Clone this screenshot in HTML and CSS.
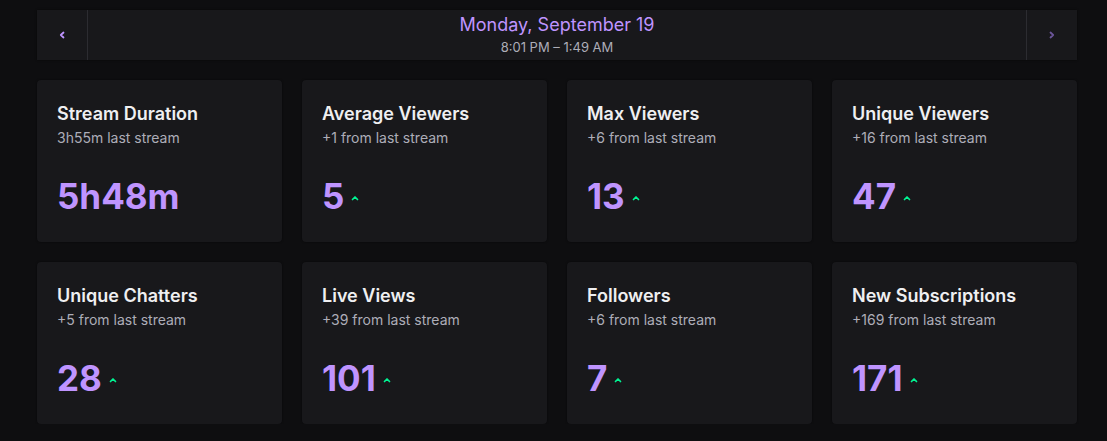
FILE: index.html
```
<!DOCTYPE html>
<html>
<head>
<meta charset="utf-8">
<link rel="stylesheet" href="styles.css">
</head>
<body>
<div class="page">
  <div class="datebar">
    <div class="nav">
      <svg width="8" height="8" viewBox="0 0 8 8"><path d="M5.5 1.5 L2.8 4 L5.5 6.5" fill="none" stroke="#bf94ff" stroke-width="1.8" stroke-linecap="round" stroke-linejoin="round"/></svg>
    </div>
    <div class="date">
      <div class="day">Monday, September 19</div>
      <div class="time">8:01 PM – 1:49 AM</div>
    </div>
    <div class="nav nav-right">
      <svg width="8" height="8" viewBox="0 0 8 8"><path d="M2.5 1.5 L5.2 4 L2.5 6.5" fill="none" stroke="#6b559a" stroke-width="1.8" stroke-linecap="round" stroke-linejoin="round"/></svg>
    </div>
  </div>
  <div class="grid">
    <div class="card"><div class="title">Stream Duration</div><div class="sub">3h55m last stream</div><div class="value"><span>5h48m</span></div></div>
    <div class="card"><div class="title">Average Viewers</div><div class="sub">+1 from last stream</div><div class="value"><span>5</span><svg class="up" width="8" height="6" viewBox="0 0 8 6"><path d="M1.5 4.5 L4 2 L6.5 4.5" fill="none" stroke="#00f593" stroke-width="1.7" stroke-linecap="round" stroke-linejoin="round"/></svg></div></div>
    <div class="card"><div class="title">Max Viewers</div><div class="sub">+6 from last stream</div><div class="value"><span>13</span><svg class="up" width="8" height="6" viewBox="0 0 8 6"><path d="M1.5 4.5 L4 2 L6.5 4.5" fill="none" stroke="#00f593" stroke-width="1.7" stroke-linecap="round" stroke-linejoin="round"/></svg></div></div>
    <div class="card"><div class="title">Unique Viewers</div><div class="sub">+16 from last stream</div><div class="value"><span>47</span><svg class="up" width="8" height="6" viewBox="0 0 8 6"><path d="M1.5 4.5 L4 2 L6.5 4.5" fill="none" stroke="#00f593" stroke-width="1.7" stroke-linecap="round" stroke-linejoin="round"/></svg></div></div>
    <div class="card"><div class="title">Unique Chatters</div><div class="sub">+5 from last stream</div><div class="value"><span>28</span><svg class="up" width="8" height="6" viewBox="0 0 8 6"><path d="M1.5 4.5 L4 2 L6.5 4.5" fill="none" stroke="#00f593" stroke-width="1.7" stroke-linecap="round" stroke-linejoin="round"/></svg></div></div>
    <div class="card"><div class="title">Live Views</div><div class="sub">+39 from last stream</div><div class="value"><span>101</span><svg class="up" width="8" height="6" viewBox="0 0 8 6"><path d="M1.5 4.5 L4 2 L6.5 4.5" fill="none" stroke="#00f593" stroke-width="1.7" stroke-linecap="round" stroke-linejoin="round"/></svg></div></div>
    <div class="card"><div class="title">Followers</div><div class="sub">+6 from last stream</div><div class="value"><span>7</span><svg class="up" width="8" height="6" viewBox="0 0 8 6"><path d="M1.5 4.5 L4 2 L6.5 4.5" fill="none" stroke="#00f593" stroke-width="1.7" stroke-linecap="round" stroke-linejoin="round"/></svg></div></div>
    <div class="card"><div class="title">New Subscriptions</div><div class="sub">+169 from last stream</div><div class="value"><span>171</span><svg class="up" width="8" height="6" viewBox="0 0 8 6"><path d="M1.5 4.5 L4 2 L6.5 4.5" fill="none" stroke="#00f593" stroke-width="1.7" stroke-linecap="round" stroke-linejoin="round"/></svg></div></div>
  </div>
</div>
</body>
</html>
```

FILE: styles.css
```
html, body {
  margin: 0;
  padding: 0;
  background: #0e0e10;
  font-family: Inter, "Noto Sans", sans-serif;
}
.page {
  padding: 10px 30px 0 37px;
  width: 1040px;
}
.datebar {
  display: flex;
  height: 50px;
  background: #18181b;
  box-shadow: 0 0 2px rgba(0,0,0,0.6);
}
.nav {
  width: 50px;
  display: flex;
  align-items: center;
  justify-content: center;
  border-right: 1px solid #2c2c31;
}
.nav-right {
  border-right: none;
  border-left: 1px solid #2c2c31;
}
.date {
  flex: 1;
  display: flex;
  flex-direction: column;
  align-items: center;
  padding-top: 4px;
}
.day {
  color: #bf94ff;
  font-size: 18px;
  line-height: 22px;
}
.time {
  color: #adadb8;
  font-size: 13px;
  line-height: 18px;
  margin-top: 2px;
}
.grid {
  margin-top: 20px;
  display: grid;
  grid-template-columns: repeat(4, 245px);
  column-gap: 20px;
  row-gap: 20px;
}
.card {
  background: #18181b;
  border-radius: 4px;
  height: 162px;
  box-sizing: border-box;
  padding: 23px 20px 0 20px;
  box-shadow: 0 0 2px rgba(0,0,0,0.6);
}
.title {
  color: #efeff1;
  font-size: 18px;
  font-weight: 600;
  line-height: 22px;
}
.sub {
  color: #adadb8;
  font-size: 14px;
  line-height: 20px;
  margin-top: 3px;
}
.value {
  margin-top: 26px;
  display: flex;
  align-items: center;
  gap: 7px;
  color: #bf94ff;
  font-size: 35px;
  font-weight: 700;
  line-height: 44px;
}
.up {
  margin-top: 4px;
}
```
